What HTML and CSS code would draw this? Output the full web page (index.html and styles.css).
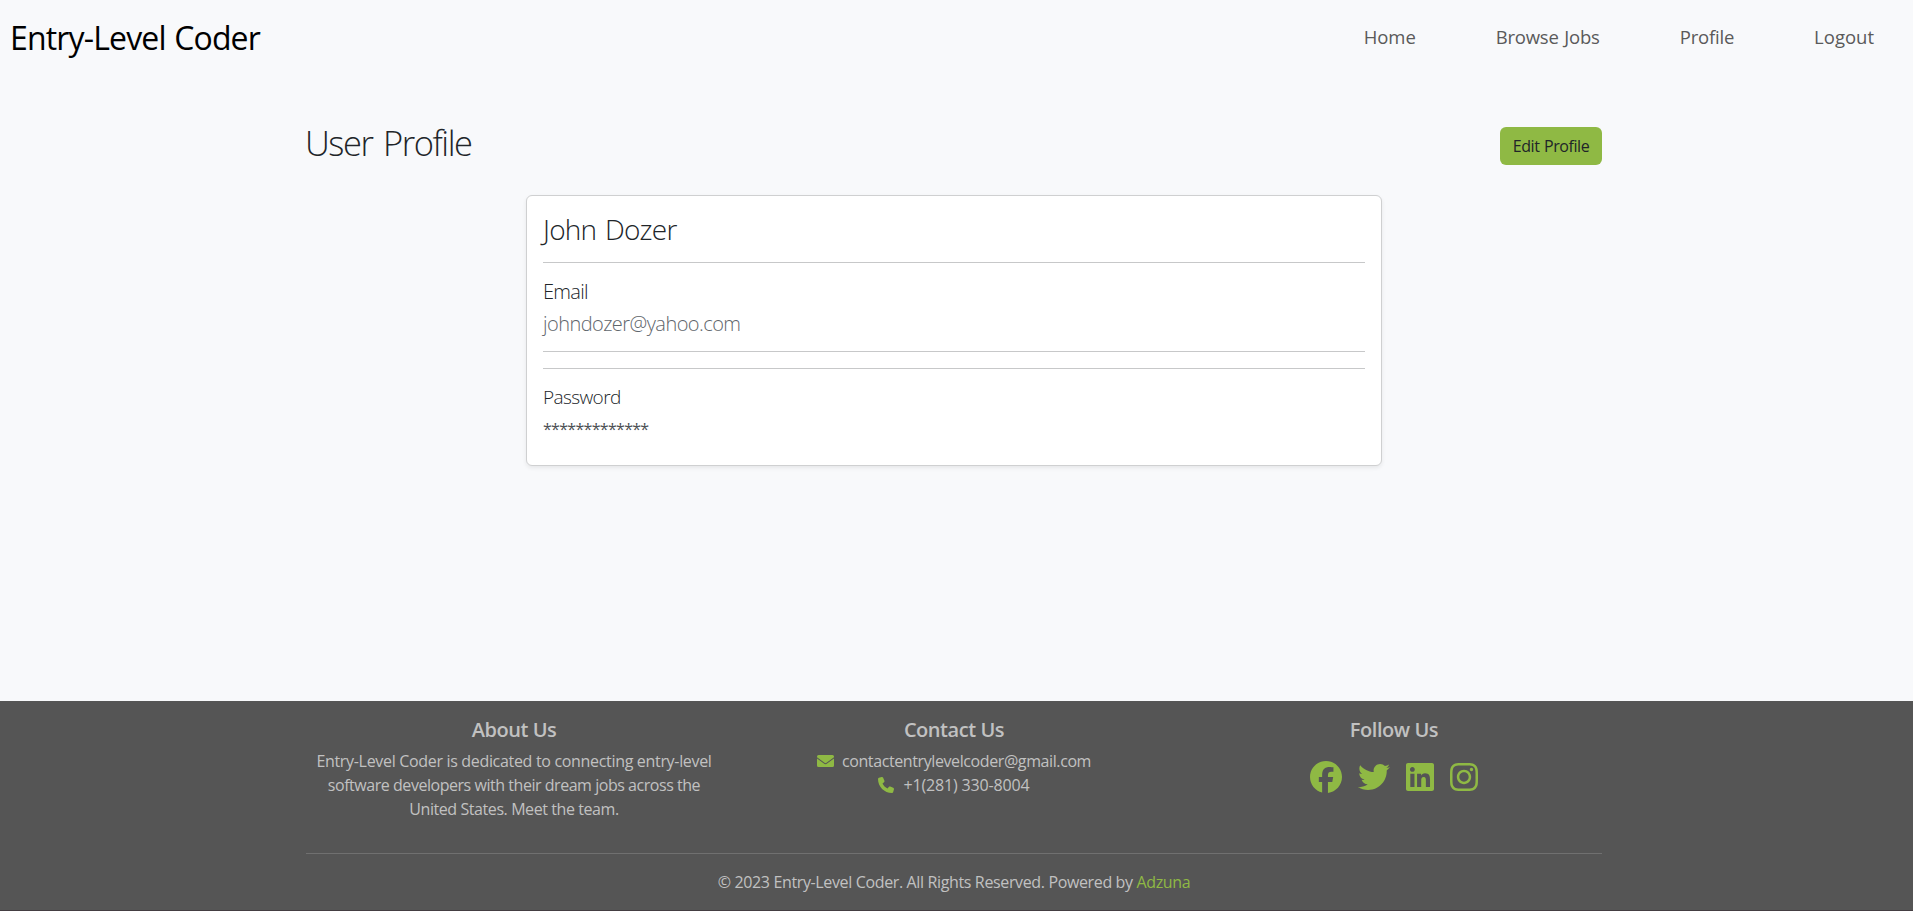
FILE: index.html
```html
<!DOCTYPE html>
<html lang="en">
<head>
<meta charset="utf-8">
<title>Entry-Level Coder</title>
<link rel="stylesheet" href="styles.css">
</head>
<body>
<header class="navbar">
  <a class="brand">Entry-Level Coder</a>
  <nav class="nav">
    <a class="nav-link nav-home">Home</a>
    <a class="nav-link nav-browse">Browse Jobs</a>
    <a class="nav-link nav-profile">Profile</a>
    <a class="nav-link nav-logout">Logout</a>
  </nav>
</header>

<main class="container">
  <div class="title-row">
    <h2 class="title">User Profile</h2>
    <button class="btn-edit">Edit Profile</button>
  </div>
  <section class="card">
    <h3 class="name">John Dozer</h3>
    <hr class="rule">
    <h5 class="label label-email">Email</h5>
    <p class="value">johndozer@yahoo.com</p>
    <hr class="rule">
    <hr class="rule">
    <h5 class="label label-password">Password</h5>
    <p class="stars">*************</p>
  </section>
</main>

<footer class="footer">
  <div class="container">
    <div class="columns">
      <div class="col">
        <h5 class="heading">About Us</h5>
        <p class="line line-a">Entry-Level Coder is dedicated to connecting entry-level</p>
        <p class="line line-b">software developers with their dream jobs across the</p>
        <p class="line line-c">United States. Meet the team.</p>
      </div>
      <div class="col">
        <h5 class="heading">Contact Us</h5>
        <p class="line contact">
          <svg class="icon-small icon-mail" viewBox="0 0 17 12"><path d="M1.500 0h14A1.500 1.500 0 0 1 17 1.500v.7L9.500 7.800a1.700 1.700 0 0 1-2 0L0 2.200v-.7A1.500 1.500 0 0 1 1.500 0zM0 3.400l6.900 5.200a2.700 2.700 0 0 0 3.200 0L17 3.400v7.100a1.500 1.500 0 0 1-1.500 1.500h-14A1.500 1.500 0 0 1 0 10.500z"/></svg>
          <span class="mail">contactentrylevelcoder@gmail.com</span>
        </p>
        <p class="line contact">
          <svg class="icon-small icon-phone" viewBox="0 0 512 512"><path d="M164.900 24.600c-7.700-18.600-28-28.500-47.400-23.200l-88 24C12.100 30.200 0 46 0 64c0 247.400 200.600 448 448 448 18 0 33.800-12.100 38.600-29.500l24-88c5.300-19.400-4.600-39.700-23.200-47.400l-96-40c-16.300-6.800-35.200-2.100-46.300 11.600L304.700 368C234.300 334.700 177.300 277.700 144 207.300L193.300 167c13.700-11.200 18.400-30 11.600-46.300z"/></svg>
          <span class="phone">+1(281) 330-8004</span>
        </p>
      </div>
      <div class="col">
        <h5 class="heading">Follow Us</h5>
        <div class="social">
          <svg class="icon icon-wide" viewBox="0 0 512 512"><path d="M512 256C512 114.600 397.400 0 256 0S0 114.600 0 256C0 376 82.700 476.800 194.200 504.500V334.200H141.400V256h52.800V222.300c0-87.100 39.400-127.500 125-127.500 16.200 0 44.200 3.200 55.700 6.400V172c-6-.6-16.500-1-29.600-1-42 0-58.200 15.900-58.200 57.200V256h83.600l-14.400 78.200H287V510.100C413.800 494.800 512 386.900 512 256z"/></svg>
          <svg class="icon icon-wide" viewBox="0 0 512 512"><path d="M459.370 151.716c.325 4.548.325 9.097.325 13.645 0 138.720-105.583 298.558-298.558 298.558-59.452 0-114.680-17.219-161.137-47.106 8.447.974 16.568 1.299 25.340 1.299 49.055 0 94.213-16.568 130.274-44.832-46.132-.975-84.792-31.188-98.112-72.772 6.498.974 12.995 1.624 19.818 1.624 9.421 0 18.843-1.300 27.614-3.573-48.081-9.747-84.143-51.980-84.143-102.985v-1.299c13.969 7.797 30.214 12.670 47.431 13.319-28.264-18.843-46.781-51.005-46.781-87.391 0-19.492 5.197-37.360 14.294-52.954 51.655 63.675 129.300 105.258 216.365 109.807-1.624-7.797-2.599-15.918-2.599-24.040 0-57.828 46.782-104.934 104.934-104.934 30.213 0 57.502 12.670 76.670 33.137 23.715-4.548 46.456-13.320 66.599-25.340-7.798 24.366-24.366 44.833-46.132 57.827 21.117-2.273 41.584-8.122 60.426-16.243-14.292 20.791-32.161 39.308-52.628 54.253z"/></svg>
          <svg class="icon" viewBox="0 0 448 512"><path d="M416 32H31.900C14.300 32 0 46.500 0 64.300v383.400C0 465.500 14.300 480 31.900 480H416c17.600 0 32-14.500 32-32.300V64.300c0-17.800-14.400-32.300-32-32.300zM135.400 416H69V202.200h66.500V416zm-33.200-243c-21.300 0-38.500-17.300-38.500-38.500S80.900 96 102.200 96c21.200 0 38.500 17.300 38.500 38.500 0 21.300-17.200 38.500-38.500 38.500zm282.100 243h-66.400V312c0-24.800-.5-56.700-34.500-56.700-34.600 0-39.900 27-39.900 54.900V416h-66.400V202.200h63.700v29.200h.9c8.900-16.800 30.600-34.500 62.900-34.500 67.200 0 79.700 44.300 79.700 101.900V416z"/></svg>
          <svg class="icon" viewBox="0 0 448 512"><path d="M224.100 141c-63.600 0-114.900 51.300-114.900 114.900s51.300 114.900 114.900 114.900S339 319.500 339 255.900 287.700 141 224.100 141zm0 189.600c-41.100 0-74.700-33.500-74.700-74.700s33.500-74.700 74.700-74.700 74.700 33.500 74.700 74.700-33.600 74.700-74.700 74.700zm146.400-194.300c0 14.900-12 26.800-26.800 26.800-14.900 0-26.800-12-26.800-26.800s12-26.800 26.800-26.800 26.800 12 26.800 26.800zm76.100 27.200c-1.700-35.900-9.900-67.700-36.200-93.900-26.200-26.200-58-34.400-93.900-36.200-37-2.100-147.900-2.100-184.900 0-35.800 1.700-67.600 9.900-93.900 36.100s-34.400 58-36.200 93.900c-2.100 37-2.100 147.900 0 184.900 1.700 35.900 9.900 67.700 36.200 93.900s58 34.400 93.900 36.200c37 2.100 147.900 2.100 184.900 0 35.900-1.700 67.700-9.900 93.900-36.200 26.200-26.200 34.400-58 36.200-93.900 2.100-37 2.100-147.800 0-184.800zM398.800 388c-7.800 19.600-22.900 34.700-42.600 42.600-29.500 11.700-99.500 9-132.100 9s-102.700 2.600-132.100-9c-19.600-7.800-34.700-22.900-42.600-42.600-11.700-29.500-9-99.500-9-132.100s-2.600-102.700 9-132.100c7.800-19.600 22.900-34.700 42.600-42.600 29.500-11.700 99.500-9 132.100-9s102.700-2.600 132.100 9c19.600 7.800 34.700 22.900 42.600 42.600 11.700 29.500 9 99.500 9 132.100s2.700 102.700-9 132.100z"/></svg>
        </div>
      </div>
    </div>
    <hr class="rule rule-footer">
    <p class="copyright">© 2023 Entry-Level Coder. All Rights Reserved. Powered by <a class="link">Adzuna</a></p>
  </div>
</footer>
</body>
</html>
```

FILE: styles.css
```css
* { box-sizing: border-box; margin: 0; }

body {
  display: flex;
  flex-direction: column;
  height: 911px;
  overflow: hidden;
  background: #f8f9fb;
  color: #212529;
  font-family: "Segoe UI", "Open Sans", sans-serif;
  font-size: 16px;
  line-height: 24px;
  white-space: nowrap;
}

.navbar {
  display: flex;
  align-items: center;
  justify-content: space-between;
  height: 75px;
  padding: 0 0 0 10px;
}
.brand { color: #000; font-size: 32px; line-height: 48px; letter-spacing: -0.84px; word-spacing: 1px; }
.nav { display: flex; padding-bottom: 2px; }
.nav-link { padding: 0 40px; color: #5a5a5a; font-size: 18.5px; }
.nav-home { letter-spacing: -0.1px; }
.nav-browse { letter-spacing: -0.2px; word-spacing: 1px; }
.nav-profile { letter-spacing: -0.2px; }
.nav-logout { letter-spacing: 0; padding-right: 39px; }

.container { width: 1325px; margin: 0 auto; padding: 0 17px 0 12px; }
main.container { padding-top: 45px; }

.title-row { display: flex; justify-content: space-between; align-items: flex-end; height: 45px; margin-bottom: 30px; }
.title { align-self: flex-start; font-size: 34.5px; font-weight: 300; line-height: 46px; letter-spacing: -1.45px; word-spacing: 3px; margin-left: -1px; }
.btn-edit {
  width: 102px;
  height: 38px;
  padding: 0;
  border: 0;
  border-radius: 6px;
  background: #8fb944;
  color: #212529;
  font: 400 16px/24px "Segoe UI", "Open Sans", sans-serif;
  letter-spacing: -0.45px;
  word-spacing: 1px;
}

.card {
  width: 856px;
  height: 271px;
  margin: 0 auto;
  padding: 16px;
  border: 1px solid #cfd0d1;
  border-radius: 6px;
  background: #fff;
  box-shadow: 0 2px 4px rgba(0, 0, 0, 0.075);
}
.name { font-size: 28px; font-weight: 300; line-height: 34px; letter-spacing: -0.75px; word-spacing: 2px; }
.rule { height: 1px; margin: 16px 0; border: 0; background: #c7c8c9; }
.label { height: 24px; margin-bottom: 8px; font-size: 20px; font-weight: 300; line-height: 26px; }
.label-email { letter-spacing: -0.7px; }
.label-password { font-size: 19px; line-height: 25px; letter-spacing: -0.6px; }
.value { height: 24px; color: #5f666c; font-size: 20px; font-weight: 300; line-height: 26px; letter-spacing: -0.55px; }
.stars { color: #4c5054; letter-spacing: -0.7px; }

.footer { height: 210px; margin-top: auto; padding-top: 16px; border-bottom: 1px solid #443e42; background: #555; color: #c1c1c1; }
.columns { display: grid; grid-template-columns: repeat(3, 440px); height: 104px; margin: 0 -12px; text-align: center; }
.heading { height: 24px; margin-bottom: 8px; font-size: 20px; font-weight: 600; line-height: 26px; letter-spacing: -0.45px; }
.line-a { letter-spacing: -0.32px; }
.line-b { letter-spacing: -0.46px; }
.line-c { letter-spacing: -0.42px; }
.contact { display: flex; justify-content: center; }
.icon-small { fill: #8fb944; flex: none; }
.icon-mail { width: 17px; height: 12px; margin: 6px 8px 0 0; }
.icon-phone { width: 16px; height: 16px; margin: 4px 9px 0 0; }
.mail { letter-spacing: -0.4px; }
.phone { letter-spacing: -0.15px; }
.social { display: flex; justify-content: center; gap: 16px; padding-top: 12px; }
.icon { width: 28px; height: 32px; fill: #8fb944; }
.icon-wide { width: 32px; }
.rule-footer { margin: 32px 0 16px; background: #707070; }
.copyright { text-align: center; letter-spacing: -0.36px; }
.link { color: #8fb944; }
```
